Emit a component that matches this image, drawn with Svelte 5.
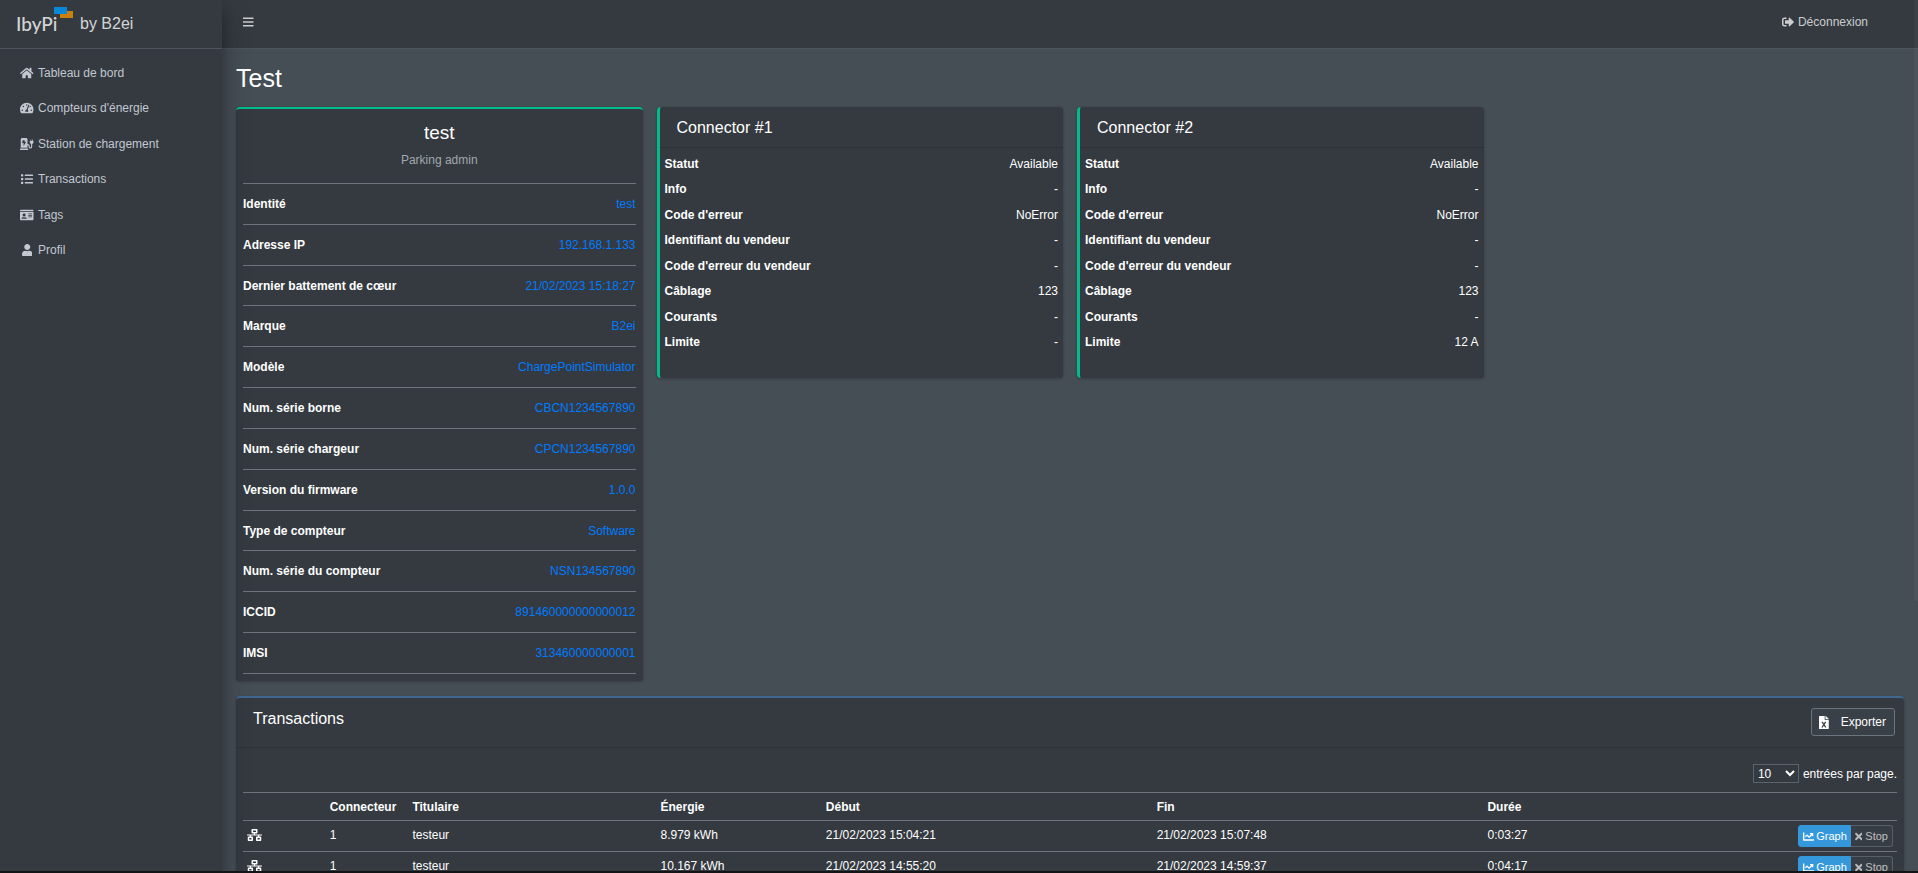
<script>
  const icons = {
    bars: [448, 'M16 132h416c8.8 0 16-7.2 16-16V76c0-8.8-7.2-16-16-16H16C7.2 60 0 67.2 0 76v40c0 8.8 7.2 16 16 16zm0 160h416c8.8 0 16-7.2 16-16v-40c0-8.8-7.2-16-16-16H16c-8.8 0-16 7.2-16 16v40c0 8.8 7.2 16 16 16zm0 160h416c8.8 0 16-7.2 16-16v-40c0-8.8-7.2-16-16-16H16c-8.8 0-16 7.2-16 16v40c0 8.8 7.2 16 16 16z'],
    home: [576, 'M280.37 148.26L96 300.11V464a16 16 0 0 0 16 16l112.06-.29a16 16 0 0 0 15.92-16V368a16 16 0 0 1 16-16h64a16 16 0 0 1 16 16v95.64a16 16 0 0 0 16 16.05L464 480a16 16 0 0 0 16-16V300L295.67 148.26a12.19 12.19 0 0 0-15.3 0zM571.6 251.47L488 182.56V44.05a12 12 0 0 0-12-12h-56a12 12 0 0 0-12 12v72.61L318.47 43a48 48 0 0 0-61 0L4.34 251.47a12 12 0 0 0-1.6 16.9l25.5 31A12 12 0 0 0 45.15 301l235.22-193.74a12.19 12.19 0 0 1 15.3 0L530.9 301a12 12 0 0 0 16.9-1.6l25.5-31a12 12 0 0 0-1.7-16.93z'],
    gauge: [576, 'M288 32C128.94 32 0 160.94 0 320c0 52.8 14.25 102.26 39.06 144.8 5.61 9.62 16.3 15.2 27.44 15.2h443c11.14 0 21.83-5.58 27.44-15.2C561.75 422.26 576 372.8 576 320c0-159.06-128.94-288-288-288zm0 64c14.71 0 26.58 10.13 30.32 23.65-1.11 2.26-2.64 4.23-3.45 6.67l-9.22 27.67c-5.13 3.49-10.97 6.01-17.64 6.01-17.67 0-32-14.33-32-32S270.33 96 288 96zM96 384c-17.67 0-32-14.33-32-32s14.33-32 32-32 32 14.33 32 32-14.33 32-32 32zm48-160c-17.67 0-32-14.33-32-32s14.33-32 32-32 32 14.33 32 32-14.33 32-32 32zm246.77-72.41l-61.33 184C343.13 347.33 352 364.54 352 384c0 11.72-3.38 22.55-8.88 32H232.88c-5.5-9.45-8.88-20.28-8.88-32 0-33.94 26.5-61.43 59.9-63.59l61.34-184.01c4.17-12.56 17.73-19.45 30.36-15.17 12.57 4.19 19.35 17.79 15.17 30.36zm14.66 57.2l15.52-46.55c3.47-1.29 7.13-2.23 11.05-2.23 17.67 0 32 14.33 32 32s-14.33 32-32 32c-11.38-.01-20.89-6.28-26.57-15.22zM480 384c-17.67 0-32-14.33-32-32s14.33-32 32-32 32 14.33 32 32-14.33 32-32 32z'],
    station: [576, 'M336 448H16c-8.84 0-16 7.16-16 16v32c0 8.84 7.16 16 16 16h320c8.84 0 16-7.16 16-16v-32c0-8.84-7.16-16-16-16zm208-320V80c0-8.84-7.16-16-16-16s-16 7.16-16 16v48h-32V80c0-8.84-7.16-16-16-16s-16 7.16-16 16v48h-16c-8.84 0-16 7.16-16 16v32c0 35.76 23.62 65.69 56 75.93v118.49c0 13.95-9.5 26.92-23.26 29.19C431.22 402.5 416 388.99 416 372v-28c0-48.6-39.4-88-88-88h-8V64c0-35.35-28.65-64-64-64H96C60.65 0 32 28.65 32 64v352h288V304h8c22.09 0 40 17.91 40 40v24.61c0 39.67 28.92 75.16 68.41 79.01C481.71 452.05 520 416.41 520 372V251.93c32.38-10.24 56-40.17 56-75.93v-32c0-8.84-7.16-16-16-16h-16zm-283.91 47.76l-93.7 139c-2.2 3.33-6.21 5.24-10.39 5.24-7.67 0-13.47-6.28-11.67-12.92L167.35 224H108c-7.25 0-12.85-5.59-11.89-11.89l16-107C112.9 99.9 117.98 96 124 96h68c7.88 0 13.62 6.54 11.6 13.21L192 160h57.7c9.24 0 15.01 8.78 10.39 15.76z'],
    list: [512, 'M80 368H16a16 16 0 0 0-16 16v64a16 16 0 0 0 16 16h64a16 16 0 0 0 16-16v-64a16 16 0 0 0-16-16zm0-320H16A16 16 0 0 0 0 64v64a16 16 0 0 0 16 16h64a16 16 0 0 0 16-16V64a16 16 0 0 0-16-16zm0 160H16a16 16 0 0 0-16 16v64a16 16 0 0 0 16 16h64a16 16 0 0 0 16-16v-64a16 16 0 0 0-16-16zm416 176H176a16 16 0 0 0-16 16v32a16 16 0 0 0 16 16h320a16 16 0 0 0 16-16v-32a16 16 0 0 0-16-16zm0-320H176a16 16 0 0 0-16 16v32a16 16 0 0 0 16 16h320a16 16 0 0 0 16-16V80a16 16 0 0 0-16-16zm0 160H176a16 16 0 0 0-16 16v32a16 16 0 0 0 16 16h320a16 16 0 0 0 16-16v-32a16 16 0 0 0-16-16z'],
    card: [576, 'M528 32H48C21.5 32 0 53.5 0 80v16h576V80c0-26.5-21.5-48-48-48zM0 432c0 26.5 21.5 48 48 48h480c26.5 0 48-21.5 48-48V128H0v304zm352-232c0-4.4 3.6-8 8-8h144c4.4 0 8 3.6 8 8v16c0 4.4-3.6 8-8 8H360c-4.4 0-8-3.6-8-8v-16zm0 64c0-4.4 3.6-8 8-8h144c4.4 0 8 3.6 8 8v16c0 4.4-3.6 8-8 8H360c-4.4 0-8-3.6-8-8v-16zm0 64c0-4.4 3.6-8 8-8h144c4.4 0 8 3.6 8 8v16c0 4.4-3.6 8-8 8H360c-4.4 0-8-3.6-8-8v-16zM176 192c35.3 0 64 28.7 64 64s-28.7 64-64 64-64-28.7-64-64 28.7-64 64-64zM67.1 396.2C75.5 370.5 99.6 352 128 352h8.2c12.3 5.1 25.7 8 39.8 8s27.6-2.9 39.8-8h8.2c28.4 0 52.5 18.5 60.9 44.2 3.2 9.9-5.2 19.8-15.6 19.8H82.7c-10.4 0-18.8-10-15.6-19.8z'],
    user: [448, 'M224 256c70.7 0 128-57.3 128-128S294.7 0 224 0 96 57.3 96 128s57.3 128 128 128zm89.6 32h-16.7c-22.2 10.2-46.9 16-72.9 16s-50.6-5.8-72.9-16h-16.7C60.2 288 0 348.2 0 422.4V464c0 26.5 21.5 48 48 48h352c26.5 0 48-21.5 48-48v-41.6c0-74.2-60.2-134.4-134.4-134.4z'],
    signOut: [512, 'M497 273L329 441c-15 15-41 4.5-41-17v-96H152c-13.3 0-24-10.7-24-24v-96c0-13.3 10.7-24 24-24h136V88c0-21.4 25.9-32 41-17l168 168c9.3 9.4 9.3 24.6 0 34zM192 436v-40c0-6.6-5.4-12-12-12H96c-17.7 0-32-14.3-32-32V160c0-17.7 14.3-32 32-32h84c6.6 0 12-5.4 12-12V76c0-6.6-5.4-12-12-12H96c-53 0-96 43-96 96v192c0 53 43 96 96 96h84c6.6 0 12-5.4 12-12z'],
    excel: [384, 'M224 136V0H24C10.7 0 0 10.7 0 24v464c0 13.3 10.7 24 24 24h336c13.3 0 24-10.7 24-24V160H248c-13.2 0-24-10.8-24-24zm60.1 106.5L224 336l60.1 93.5c5.1 8-.6 18.5-10.1 18.5h-34.9c-4.4 0-8.5-2.4-10.6-6.3C208.9 405.5 192 373 192 373c-6.4 14.8-10 20-36.6 68.8-2.1 3.9-6.1 6.3-10.5 6.3H110c-9.5 0-15.2-10.5-10.1-18.5l60.3-93.5-60.3-93.5c-5.2-8 .6-18.5 10.1-18.5h34.8c4.4 0 8.5 2.4 10.6 6.3 26.1 48.8 20 33.6 36.6 68.5 0 0 6.1-11.7 36.6-68.5 2.1-3.9 6.2-6.3 10.6-6.3H274c9.5-.1 15.2 10.4 10.1 18.4zM384 121.9v6.1H256V0h6.1c6.4 0 12.5 2.5 17 7l97.9 98c4.5 4.5 7 10.6 7 16.9z'],
    network: [640, 'M640 264v-16c0-8.84-7.16-16-16-16H344v-40h72c17.67 0 32-14.33 32-32V32c0-17.67-14.33-32-32-32H224c-17.67 0-32 14.33-32 32v128c0 17.67 14.33 32 32 32h72v40H16c-8.84 0-16 7.16-16 16v16c0 8.84 7.16 16 16 16h104v40H64c-17.67 0-32 14.33-32 32v128c0 17.67 14.33 32 32 32h160c17.67 0 32-14.33 32-32V352c0-17.67-14.33-32-32-32h-56v-40h304v40h-56c-17.67 0-32 14.33-32 32v128c0 17.67 14.33 32 32 32h160c17.67 0 32-14.33 32-32V352c0-17.67-14.33-32-32-32h-56v-40h104c8.84 0 16-7.16 16-16zM256 128V64h128v64H256zm-64 320H96v-64h96v64zm352 0h-96v-64h96v64z'],
    chart: [512, 'M496 384H64V80c0-8.84-7.16-16-16-16H16C7.16 64 0 71.16 0 80v336c0 17.67 14.33 32 32 32h464c8.84 0 16-7.16 16-16v-32c0-8.84-7.16-16-16-16zM464 96H345.94c-21.38 0-32.09 25.85-16.97 40.97l32.4 32.4L288 242.75l-73.37-73.37c-12.5-12.5-32.76-12.5-45.25 0l-68.69 68.69c-6.25 6.25-6.25 16.38 0 22.63l22.62 22.62c6.25 6.25 16.38 6.25 22.63 0L192 237.25l73.37 73.37c12.5 12.5 32.76 12.5 45.25 0l96-96 32.4 32.4c15.12 15.12 40.97 4.41 40.97-16.97V112c.01-8.84-7.15-16-15.99-16z'],
    times: [352, 'M242.72 256l100.07-100.07c12.28-12.28 12.28-32.19 0-44.48l-22.24-22.24c-12.28-12.28-32.19-12.28-44.48 0L176 189.28 75.93 89.21c-12.28-12.28-32.19-12.28-44.48 0L9.21 111.45c-12.28 12.28-12.28 32.19 0 44.48L109.28 256 9.21 356.07c-12.28 12.28-12.28 32.19 0 44.48l22.24 22.24c12.28 12.28 32.2 12.28 44.48 0L176 322.72l100.07 100.07c12.28 12.28 32.2 12.28 44.48 0l22.24-22.24c12.28-12.28 12.28-32.19 0-44.48L242.72 256z']
  };

  const menu = [
    ['home', 'Tableau de bord'],
    ['gauge', "Compteurs d'énergie"],
    ['station', 'Station de chargement'],
    ['list', 'Transactions'],
    ['card', 'Tags'],
    ['user', 'Profil']
  ];

  const details = [
    ['Identité', 'test'],
    ['Adresse IP', '192.168.1.133'],
    ['Dernier battement de cœur', '21/02/2023 15:18:27'],
    ['Marque', 'B2ei'],
    ['Modèle', 'ChargePointSimulator'],
    ['Num. série borne', 'CBCN1234567890'],
    ['Num. série chargeur', 'CPCN1234567890'],
    ['Version du firmware', '1.0.0'],
    ['Type de compteur', 'Software'],
    ['Num. série du compteur', 'NSN134567890'],
    ['ICCID', '891460000000000012'],
    ['IMSI', '313460000000001']
  ];

  const connectorLabels = [
    'Statut', 'Info', "Code d'erreur", 'Identifiant du vendeur',
    "Code d'erreur du vendeur", 'Câblage', 'Courants', 'Limite'
  ];

  const connectors = [
    { name: 'Connector #1', values: ['Available', '-', 'NoError', '-', '-', '123', '-', '-'] },
    { name: 'Connector #2', values: ['Available', '-', 'NoError', '-', '-', '123', '-', '12 A'] }
  ];

  const transactions = [
    ['1', 'testeur', '8.979 kWh', '21/02/2023 15:04:21', '21/02/2023 15:07:48', '0:03:27'],
    ['1', 'testeur', '10.167 kWh', '21/02/2023 14:55:20', '21/02/2023 14:59:37', '0:04:17']
  ];

  let pageSize = $state('10');
</script>

{#snippet icon(name)}
  <svg class="icon" viewBox="0 0 {icons[name][0]} 512" aria-hidden="true"><path d={icons[name][1]} /></svg>
{/snippet}

<div class="shell">
  <aside class="sidebar">
    <a class="brand" href="#accueil">
      <span class="logo">IbyPi
        <svg class="flags" viewBox="0 0 19 11" aria-hidden="true">
          <rect x="6" y="4" width="13" height="7" fill="#f39200" />
          <rect width="13" height="7" fill="#009cff" />
        </svg>
      </span>
      <span class="brand-text">by B2ei</span>
    </a>
    <nav>
      <ul class="menu">
        {#each menu as [name, label]}
          <li><a href="#menu"><span class="menu-icon">{@render icon(name)}</span>{label}</a></li>
        {/each}
      </ul>
    </nav>
  </aside>

  <div class="page">
    <header class="topbar">
      <button class="toggle" aria-label="Menu">{@render icon('bars')}</button>
      <a class="logout" href="#deconnexion">{@render icon('signOut')}Déconnexion</a>
    </header>

    <main>
      <h1>Test</h1>

      <div class="cards">
        <section class="card profile">
          <h2>test</h2>
          <p>Parking admin</p>
          <ul class="details">
            {#each details as [label, value]}
              <li><b>{label}</b><a href="#detail">{value}</a></li>
            {/each}
          </ul>
        </section>

        {#each connectors as connector}
          <section class="card connector">
            <div class="card-header"><h3>{connector.name}</h3></div>
            <table class="facts">
              <tbody>
                {#each connectorLabels as label, i}
                  <tr><th scope="row">{label}</th><td>{connector.values[i]}</td></tr>
                {/each}
              </tbody>
            </table>
          </section>
        {/each}
      </div>

      <section class="card transactions">
        <div class="card-header">
          <h3>Transactions</h3>
          <button class="export">{@render icon('excel')}Exporter</button>
        </div>
        <div class="card-body">
          <div class="length">
            <select id="page-size" bind:value={pageSize}>
              <option>10</option>
              <option>25</option>
              <option>50</option>
            </select>
            <label for="page-size">entrées par page.</label>
          </div>
          <table class="history">
            <colgroup>
              <col class="w5" /><col class="w5" /><col class="w15" /><col class="w10" />
              <col class="w20" /><col class="w20" /><col class="w10" /><col class="w15" />
            </colgroup>
            <thead>
              <tr>
                <th></th><th>Connecteur</th><th>Titulaire</th><th>Énergie</th>
                <th>Début</th><th>Fin</th><th>Durée</th><th></th>
              </tr>
            </thead>
            <tbody>
              {#each transactions as row}
                <tr>
                  <td><span class="source">{@render icon('network')}</span></td>
                  {#each row as cell}<td>{cell}</td>{/each}
                  <td>
                    <div class="actions">
                      <button class="graph">{@render icon('chart')}Graph</button>
                      <button class="stop" disabled>{@render icon('times')}Stop</button>
                    </div>
                  </td>
                </tr>
              {/each}
            </tbody>
          </table>
        </div>
      </section>
    </main>
  </div>
  <div class="scroll-thumb" aria-hidden="true"></div>
</div>

<style>
  :global(body) {
    background: #454d55;
  }

  .shell {
    box-sizing: border-box;
    position: relative;
    display: flex;
    height: 100vh;
    overflow: hidden;
    border-bottom: 2px solid #121416;
    background: #454d55;
    color: #fff;
    font: 12px/18px "Liberation Sans", Arial, sans-serif;
  }

  .shell :global(*) {
    box-sizing: border-box;
  }

  a {
    color: #007bff;
    text-decoration: none;
  }

  button, select {
    font-family: inherit;
    color: inherit;
  }

  h1, h2, h3, p, ul {
    margin: 0;
    padding: 0;
    font-weight: 400;
    list-style: none;
  }

  .icon {
    display: block;
    flex: none;
    height: 12px;
    fill: currentColor;
  }

  .sidebar {
    position: relative;
    z-index: 2;
    flex: 0 0 222px;
    background: #343a40;
    box-shadow: 0 14px 28px rgba(0, 0, 0, .25), 0 10px 10px rgba(0, 0, 0, .22);
  }

  .brand {
    display: flex;
    align-items: center;
    height: 49px;
    padding-left: 16px;
    border-bottom: 1px solid #4b545c;
    color: rgba(255, 255, 255, .8);
  }

  .logo {
    position: relative;
    width: 64px;
    font: 500 19px/24px Lato, sans-serif;
  }

  .flags {
    position: absolute;
    left: 38px;
    top: -5px;
    width: 19px;
    height: 11px;
    opacity: .8;
  }

  .brand-text {
    font-size: 16px;
    line-height: 24px;
  }

  .menu {
    display: grid;
    grid-auto-rows: 1fr;
    min-height: 213px;
    margin-top: 6px;
  }

  .menu a {
    display: flex;
    align-items: center;
    height: 100%;
    padding-left: 19px;
    gap: 3px;
    color: #c2c7d0;
  }

  .menu-icon {
    display: flex;
    justify-content: center;
    width: 16px;
  }

  .page {
    flex: 1;
    min-width: 0;
    display: flex;
    flex-direction: column;
  }

  .topbar {
    display: flex;
    flex: none;
    justify-content: space-between;
    height: 49px;
    padding: 4px 50px 9px 21px;
    border-bottom: 1px solid #4b545c;
    background: #343a40;
    color: rgba(255, 255, 255, .75);
  }

  .toggle {
    display: flex;
    align-items: center;
    padding: 0;
    border: 0;
    background: none;
  }

  .logout {
    display: flex;
    align-items: center;
    gap: 4px;
    color: inherit;
  }

  main {
    flex: 1;
    min-height: 0;
    overflow-y: auto;
    scrollbar-width: none;
    padding: 14px;
  }

  h1 {
    margin-bottom: 14px;
    font-size: 25px;
    line-height: 30px;
  }

  .cards {
    display: grid;
    grid-template-columns: repeat(4, minmax(0, 1fr));
    align-items: start;
    gap: 14px;
    margin-bottom: 15px;
  }

  .card {
    border-radius: 4px;
    background: #343a40;
    box-shadow: 0 0 1px rgba(0, 0, 0, .125), 0 1px 3px rgba(0, 0, 0, .2);
  }

  .profile {
    padding: 8px 7px 7px;
    border-top: 2px solid #00bc8c;
    text-align: center;
  }

  .profile h2 {
    margin-bottom: 2px;
    font-size: 19px;
    line-height: 32px;
  }

  .profile p {
    margin-bottom: 14px;
    color: #a1a8ae;
  }

  .details {
    display: grid;
    grid-auto-rows: 1fr;
    min-height: 491px;
    border-top: 1px solid #6c757d;
  }

  .details li {
    display: flex;
    align-items: center;
    justify-content: space-between;
    border-bottom: 1px solid #6c757d;
  }

  .connector {
    padding-bottom: 23px;
    border-left: 3px solid #00bc8c;
  }

  .card-header {
    display: flex;
    align-items: flex-start;
    justify-content: space-between;
    padding: 9px 9px 7px 17px;
    border-bottom: 1px solid rgba(0, 0, 0, .125);
  }

  h3 {
    font-size: 16px;
    line-height: 24px;
  }

  .facts {
    width: 100%;
    height: 204px;
    margin-top: 3px;
    border-collapse: collapse;
  }

  .facts th, .facts td {
    padding: 0 5px;
    text-align: left;
  }

  .facts td {
    text-align: right;
  }

  .transactions {
    border-top: 2px solid #3f6791;
  }

  .transactions .card-header {
    height: 50px;
  }

  .export {
    display: flex;
    align-items: center;
    gap: 12px;
    height: 28px;
    margin-top: 1px;
    padding: 0 8px 0 7px;
    border: 1px solid #6c757d;
    border-radius: 3px;
    background: #3a4047;
    font-size: 12px;
  }

  .export :global(.icon) {
    height: 13px;
  }

  .card-body {
    padding: 16px 7px 7px;
  }

  .length {
    display: flex;
    align-items: center;
    justify-content: flex-end;
    gap: 4px;
    height: 19px;
    margin-bottom: 9px;
  }

  select {
    width: 46px;
    height: 19px;
    padding: 0;
    border: 1px solid #5c646b;
    border-radius: 0;
    background-color: #343a40;
    font-size: 12px;
  }

  .history {
    width: 100%;
    table-layout: fixed;
    border-collapse: collapse;
  }

  .w5 { width: 5%; }
  .w10 { width: 10%; }
  .w15 { width: 15%; }
  .w20 { width: 20%; }

  .history th, .history td {
    padding: 4px;
    border-top: 1px solid #6c757d;
    line-height: 20px;
    text-align: left;
    vertical-align: top;
    white-space: nowrap;
  }

  .history th {
    padding-bottom: 3px;
  }

  .source {
    display: flex;
    align-items: center;
    height: 20px;
  }

  .actions {
    display: flex;
    justify-content: flex-end;
  }

  .actions button {
    display: flex;
    align-items: center;
    gap: 2px;
    height: 22px;
    padding: 0 4px;
    border: 1px solid #3498db;
    font-size: 11px;
    line-height: 16px;
  }

  .actions :global(.icon) {
    height: 11px;
  }

  .actions .graph {
    padding-right: 3px;
    border-radius: 3px 0 0 3px;
    background: #3498db;
  }

  .actions .stop {
    gap: 3px;
    border-color: #6c757d;
    border-left: 0;
    border-radius: 0 3px 3px 0;
    background: #3a4047;
    opacity: .65;
  }

  .scroll-thumb {
    position: absolute;
    z-index: 3;
    top: 0;
    right: 0;
    width: 4px;
    height: 69%;
    background: rgba(255, 255, 255, .04);
  }
</style>
